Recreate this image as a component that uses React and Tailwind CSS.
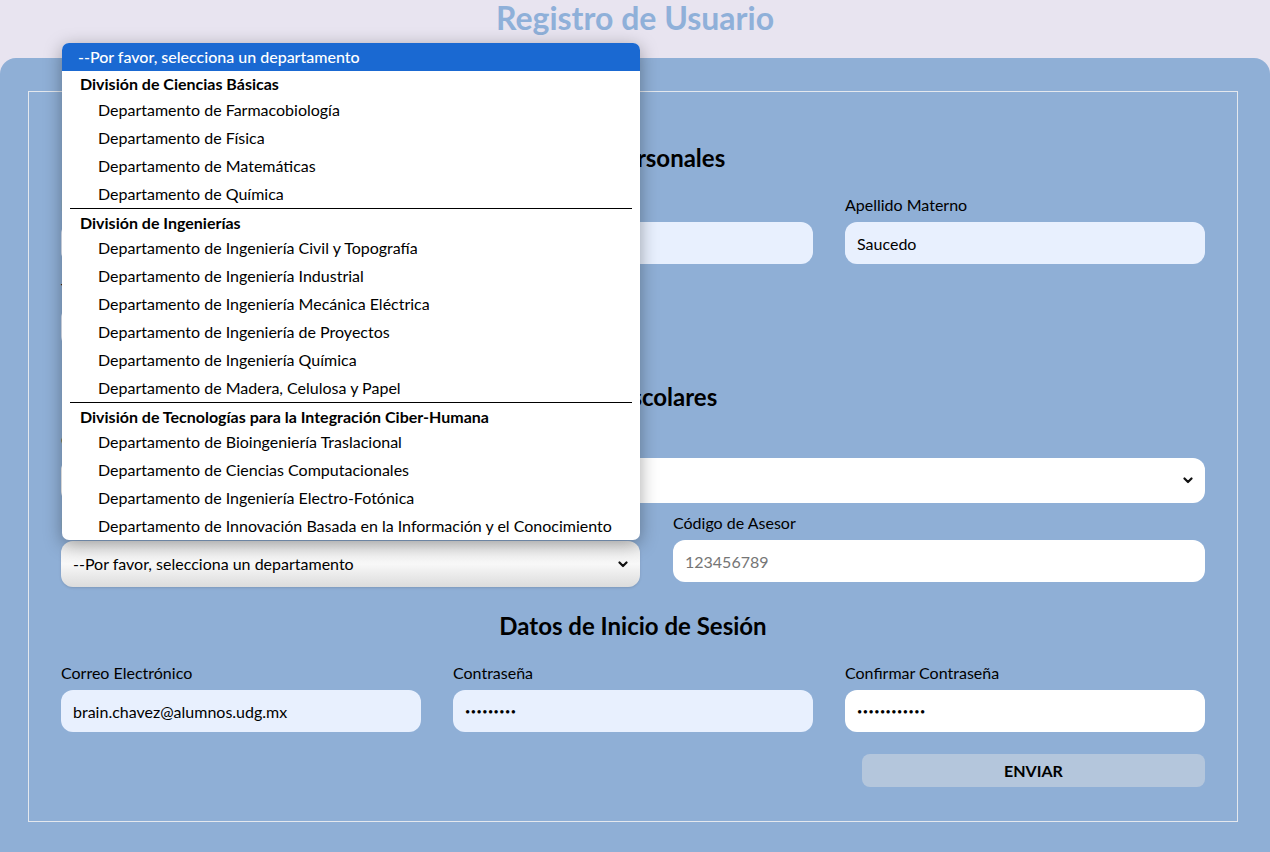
import React from 'react';

const GROUPS = [
  {
    name: 'División de Ciencias Básicas',
    items: [
      'Departamento de Farmacobiología',
      'Departamento de Física',
      'Departamento de Matemáticas',
      'Departamento de Química',
    ],
  },
  {
    name: 'División de Ingenierías',
    items: [
      'Departamento de Ingeniería Civil y Topografía',
      'Departamento de Ingeniería Industrial',
      'Departamento de Ingeniería Mecánica Eléctrica',
      'Departamento de Ingeniería de Proyectos',
      'Departamento de Ingeniería Química',
      'Departamento de Madera, Celulosa y Papel',
    ],
  },
  {
    name: 'División de Tecnologías para la Integración Ciber-Humana',
    items: [
      'Departamento de Bioingeniería Traslacional',
      'Departamento de Ciencias Computacionales',
      'Departamento de Ingeniería Electro-Fotónica',
      'Departamento de Innovación Basada en la Información y el Conocimiento',
    ],
  },
];

const Chevron = () => (
  <svg width="10" height="7" viewBox="0 0 10 7" fill="none" className="shrink-0">
    <path d="M1.5 1.5 L5 5 L8.5 1.5" stroke="#111" strokeWidth="2.2" strokeLinecap="round" strokeLinejoin="round" />
  </svg>
);

const Label = ({ children }) => (
  <label className="block text-[16px] leading-[20px] text-black">{children}</label>
);

const Field = ({ label, value, placeholder, filled, type = 'text', small }) => (
  <div>
    <Label>{label}</Label>
    <input
      type={type}
      readOnly
      defaultValue={value}
      placeholder={placeholder}
      className={`mt-[7px] w-full h-[42px] rounded-[12px] px-[12px] outline-none text-black placeholder-[#757575] ${
        filled ? 'bg-[#e8f0fe]' : 'bg-white'
      } ${small ? 'text-[9px] tracking-[0.5px]' : 'text-[16px]'}`}
    />
  </div>
);

const Heading = ({ children, className }) => (
  <h2 className={`text-center text-[24px] leading-[28px] font-bold text-black ${className}`}>{children}</h2>
);

export default function App() {
  return (
    <div className="relative min-h-screen flex flex-col bg-[#e8e4f0] font-['Lato','Noto_Sans',sans-serif]">
      <h1 className="text-center text-[32px] leading-[36px] font-bold text-[#8fb0d9]">Registro de Usuario</h1>

      <div className="flex-1 mt-[22px] bg-[#8fafd6] rounded-t-[16px] pl-[28px] pr-[32px] pt-[33px] pb-[31px]">
        <div className="border border-[#e4e8ee] px-[32px] pb-[34px]">
          <Heading className="pt-[52px]">Datos Personales</Heading>

          <div className="mt-[23px] grid grid-cols-3 gap-x-[32px]">
            <Field label="Nombre(s)" value="Brian" filled />
            <Field label="Apellido Paterno" value="Chávez" filled />
            <Field label="Apellido Materno" value="Saucedo" filled />
          </div>

          <div className="mt-[15px] grid grid-cols-3 gap-x-[32px]">
            <Field label="Teléfono" value="3312345678" filled />
          </div>

          <Heading className="mt-[35px]">Datos Escolares</Heading>

          <div className="mt-[19px]">
            <Label>Carrera</Label>
            <div className="mt-[8px] h-[45px] rounded-[12px] bg-white px-[12px] flex items-center justify-between text-[16px]">
              <span></span>
              <Chevron />
            </div>
          </div>

          <div className="mt-[10px] grid grid-cols-[579px_1fr] gap-x-[33px] items-start">
            <div>
              <Label>Departamento</Label>
              <div className="mt-[8px] h-[46px] rounded-[12px] bg-gradient-to-b from-[#ececec] via-[#f8f8f8] to-[#dcdcdc] px-[12px] flex items-center justify-between text-[16px] text-black shadow-sm">
                <span>--Por favor, selecciona un departamento</span>
                <Chevron />
              </div>
            </div>
            <Field label="Código de Asesor" placeholder="123456789" />
          </div>

          <Heading className="mt-[25px]">Datos de Inicio de Sesión</Heading>

          <div className="mt-[23px] grid grid-cols-3 gap-x-[32px]">
            <Field label="Correo Electrónico" value="brain.chavez@alumnos.udg.mx" filled />
            <Field label="Contraseña" type="password" value="123456789" filled small />
            <Field label="Confirmar Contraseña" type="password" value="123456789012" small />
          </div>

          <div className="mt-[22px] flex justify-end">
            <button className="w-[343px] h-[33px] rounded-[8px] bg-[#b4c6dc] text-[16px] font-bold text-black">
              ENVIAR
            </button>
          </div>
        </div>
      </div>

      {/* open native dropdown list */}
      <div className="absolute left-[62px] top-[43px] w-[578px] rounded-[7px] bg-white shadow-[0_4px_18px_rgba(0,0,0,0.35)] overflow-hidden text-[16px] text-black">
        <div className="h-[28px] bg-[#1a69d2] text-white px-[16px] flex items-center font-medium">
          --Por favor, selecciona un departamento
        </div>
        {GROUPS.map((g, gi) => (
          <div key={g.name}>
            {gi > 0 && <div className="mx-[8px] border-t border-black" />}
            <div className={`${gi > 0 ? 'h-[25px] pt-[2px]' : 'h-[25px]'} px-[18px] flex items-center font-bold`}>{g.name}</div>
            {g.items.map((it) => (
              <div key={it} className="h-[28px] pl-[36px] flex items-center">
                {it}
              </div>
            ))}
          </div>
        ))}
      </div>
    </div>
  );
}
